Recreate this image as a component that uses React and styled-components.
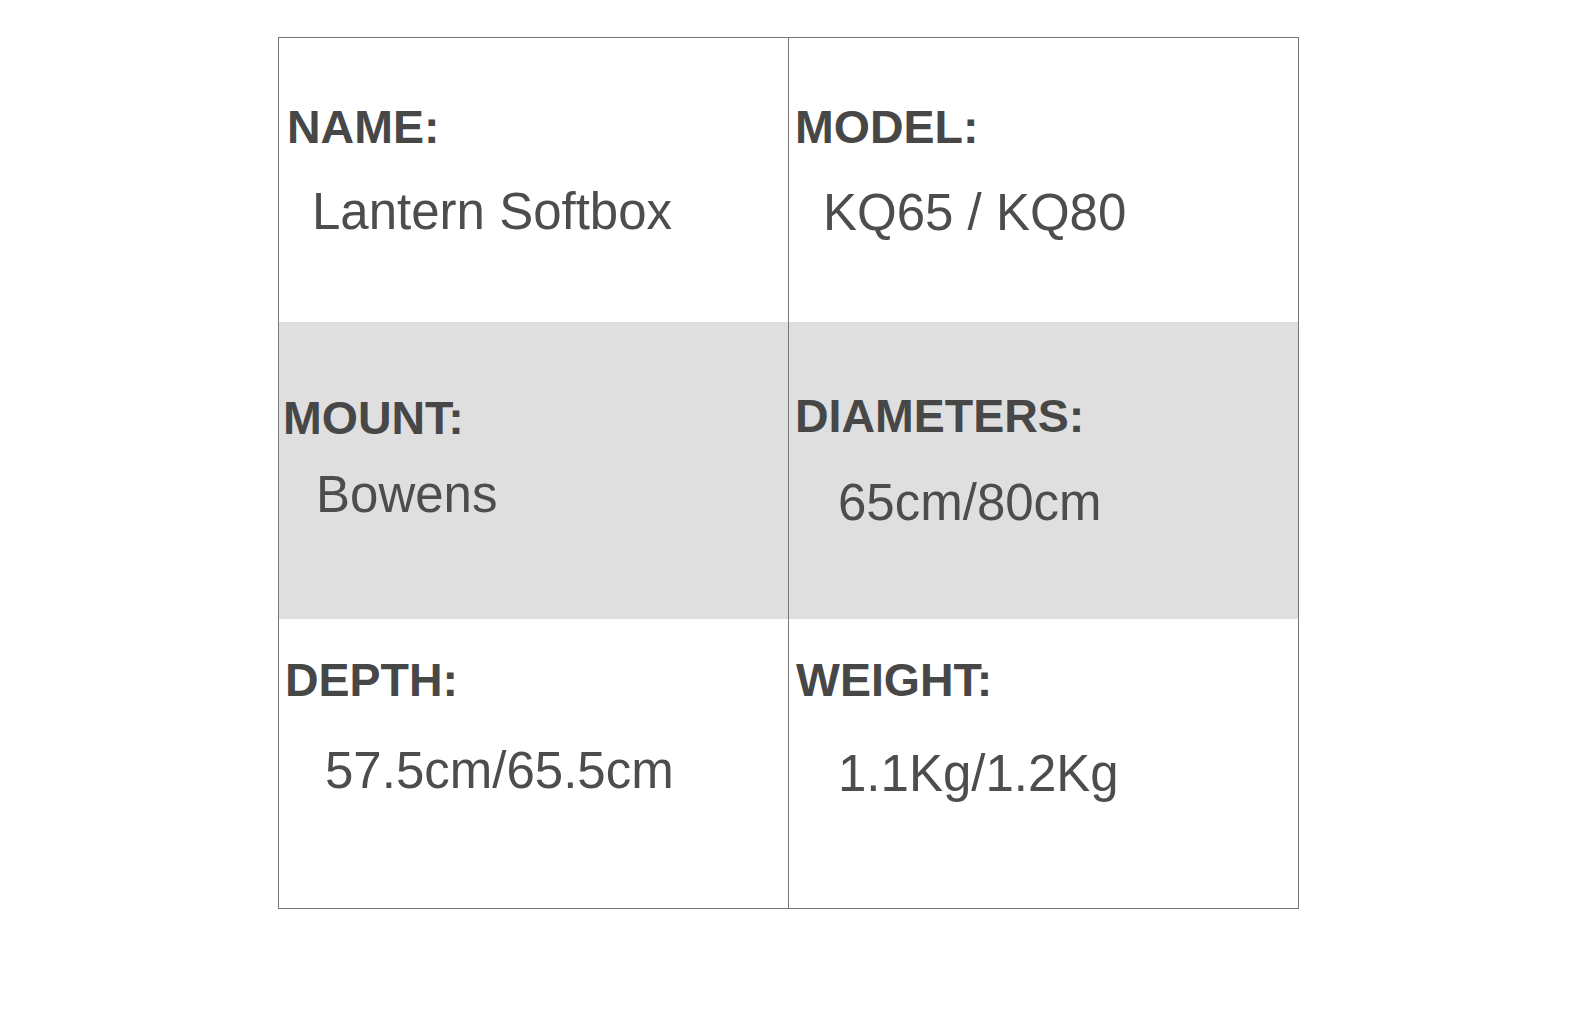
import React from 'react'
import styled, { createGlobalStyle } from 'styled-components'

const GlobalStyle = createGlobalStyle`
  body {
    margin: 0;
    background: #fff;
    font-family: "Liberation Sans", Arial, sans-serif;
  }
`

const Page = styled.div`
  width: 1580px;
  height: 1016px;
  padding: 37px 0 0 278px;
  box-sizing: border-box;
`

const SpecTable = styled.div`
  display: grid;
  grid-template-columns: 510px 509px;
  grid-template-rows: 284px 297px 289px;
  width: 1021px;
  border: 1px solid #777;
  box-sizing: border-box;
`

const Cell = styled.div`
  display: flex;
  flex-direction: column;
  align-items: flex-start;
  padding: ${p => p.$pt}px 0 0 0;
  background: ${p => (p.$shaded ? '#dfdfdf' : '#fff')};
  border-right: ${p => (p.$left ? '1px solid #777' : 'none')};
`

const Label = styled.div`
  font-size: 46.5px;
  line-height: 50px;
  font-weight: 700;
  color: #474747;
  padding-left: ${p => p.$x}px;
  white-space: nowrap;
`

const Value = styled.div`
  font-size: 51px;
  line-height: 57px;
  font-weight: 400;
  color: #4d4d4d;
  margin-top: ${p => p.$gap}px;
  padding-left: ${p => p.$x}px;
  white-space: nowrap;
`

const specs = [
  { label: 'NAME:', value: 'Lantern Softbox', left: true, pt: 64, lx: 8, vx: 33, gap: 31 },
  { label: 'MODEL:', value: 'KQ65 / KQ80', pt: 64, lx: 6, vx: 34, gap: 32 },
  { label: 'MOUNT:', value: 'Bowens', left: true, shaded: true, pt: 71, lx: 4, vx: 37, gap: 23 },
  { label: 'DIAMETERS:', value: '65cm/80cm', shaded: true, pt: 69, lx: 6, vx: 49, gap: 33 },
  { label: 'DEPTH:', value: '57.5cm/65.5cm', left: true, pt: 36, lx: 6, vx: 46, gap: 37 },
  { label: 'WEIGHT:', value: '1.1Kg/1.2Kg', pt: 36, lx: 7, vx: 49, gap: 40 },
]

const App = () => {
  return (
    <Page>
      <GlobalStyle />
      <SpecTable>
        {specs.map(s => (
          <Cell key={s.label} $left={s.left} $shaded={s.shaded} $pt={s.pt}>
            <Label $x={s.lx}>{s.label}</Label>
            <Value $x={s.vx} $gap={s.gap}>{s.value}</Value>
          </Cell>
        ))}
      </SpecTable>
    </Page>
  )
}

export default App
